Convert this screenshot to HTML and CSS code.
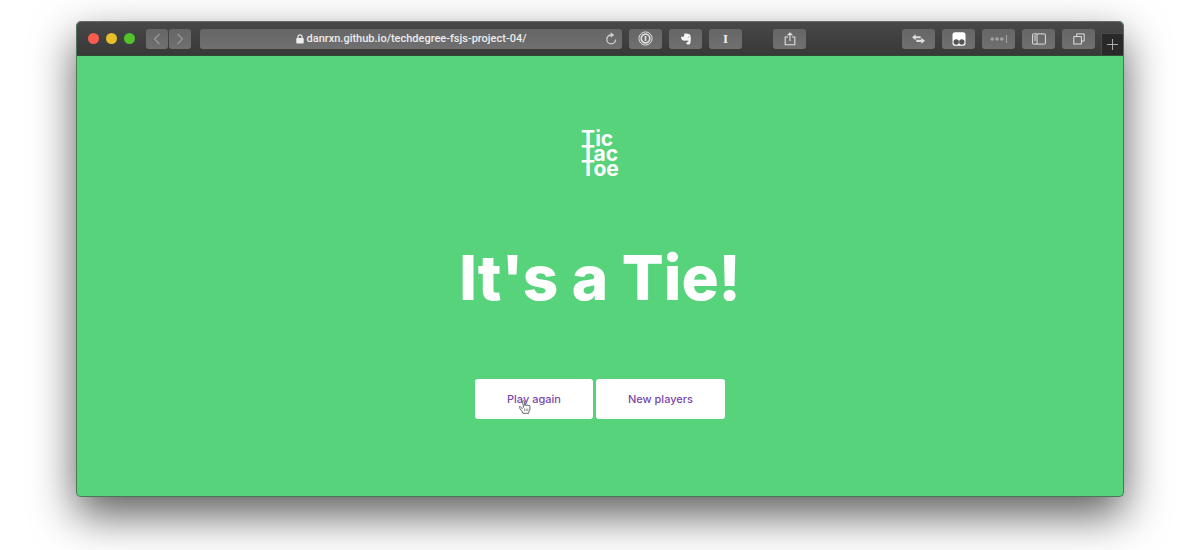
FILE: index.html
```html
<!DOCTYPE html>
<html lang="en">
<head>
  <meta charset="utf-8">
  <meta name="viewport" content="width=device-width, initial-scale=1">
  <title>Tic Tac Toe</title>
  <link rel="stylesheet" href="styles.css">
</head>
<body>
  <div class="window">
    <header class="toolbar">
      <div class="lights">
        <button class="light light-close" aria-label="Close"></button>
        <button class="light light-minimize" aria-label="Minimize"></button>
        <button class="light light-zoom" aria-label="Zoom"></button>
      </div>
      <div class="history">
        <button class="tool tool-nav" aria-label="Back">
          <svg width="8" height="12" viewBox="0 0 8 12"><path d="M6.5 1 1.5 6l5 5" fill="none" stroke="#999" stroke-width="1.2"/></svg>
        </button>
        <button class="tool tool-nav" aria-label="Forward">
          <svg width="8" height="12" viewBox="0 0 8 12"><path d="m1.5 1 5 5-5 5" fill="none" stroke="#999" stroke-width="1.2"/></svg>
        </button>
      </div>
      <div class="address">
        <span class="url">
          <svg width="8" height="10" viewBox="0 0 8 10"><rect x="0.3" y="4" width="7.4" height="5.6" rx="0.8" fill="#eee"/><path d="M2 4.5V2.8a2 2 0 0 1 4 0v1.7" fill="none" stroke="#eee" stroke-width="1.2"/></svg>
          danrxn.github.io/techdegree-fsjs-project-04/
        </span>
        <button class="reload" aria-label="Reload">
          <svg width="12" height="13" viewBox="0 0 12 13"><path d="M6.2 3a4.4 4.4 0 1 0 4.4 4.4" fill="none" stroke="#d0d0d0" stroke-width="1.3"/><path d="M5.7.3 9.2 3 5.7 5.8z" fill="#d0d0d0"/></svg>
        </button>
      </div>
      <div class="tools">
        <button class="tool" aria-label="Passwords">
          <svg width="15" height="15" viewBox="0 0 15 15" fill="none" stroke="#dedede"><circle cx="7.5" cy="7.5" r="6.6" stroke-width="1"/><circle cx="7.5" cy="7.5" r="4.3" stroke-width="1.7"/><path d="M7.5 5v5" stroke-width="1.7"/></svg>
        </button>
        <button class="tool" aria-label="Clip page">
          <svg width="10" height="12" viewBox="0 0 10 12"><path d="M3.2.8C4 .2 5 .3 5.6.8c1.4.1 2.8.2 3.4.8.8 1.4.9 4 .7 6.2-.1 2.3-.6 3.8-1.8 3.8H6.8c-1.7 0-1.9-2.4-.4-2.7l1-.1V7.8C6.6 8 5.8 7.7 5.4 7.2c-1 .9-3.1.6-4.2-.2C.5 6.2.1 4.9.1 3.7h2.1c.7 0 1-.3 1-.9z" fill="#f5f5f5"/><path d="M6.8 4.6c.4-.6 1.1-.5 1.4.1" stroke="#777" stroke-width="0.6" fill="none"/></svg>
        </button>
        <button class="tool tool-serif" aria-label="Save to read later">I</button>
      </div>
      <button class="tool tool-share" aria-label="Share">
        <svg width="12" height="14" viewBox="0 0 12 14" fill="none" stroke="#e0e0e0" stroke-width="1.1"><path d="M4 5H1.2v7.8h9.6V5H8M6 9V1.2M3.6 3.4 6 1l2.4 2.4"/></svg>
      </button>
      <div class="tools tools-end">
        <button class="tool" aria-label="Redirects">
          <svg width="13" height="10" viewBox="0 0 13 10" fill="#dcdcdc"><path d="M0 3.2 3.7.2v2h5v2.1h-5v1.9z"/><path d="M13 6.8 9.3 3.8v2h-5v2.1h5v1.9z"/></svg>
        </button>
        <button class="tool" aria-label="User scripts">
          <svg width="14" height="14" viewBox="0 0 14 14"><rect x="0.5" y="0.3" width="13" height="13.4" rx="2.5" fill="#fff"/><circle cx="4.2" cy="10" r="2.7" fill="#555"/><circle cx="9.8" cy="10" r="2.7" fill="#555"/></svg>
        </button>
        <button class="tool" aria-label="Autofill">
          <svg width="18" height="10" viewBox="0 0 18 10" fill="#a4a4a4"><circle cx="2.2" cy="5" r="1.8"/><circle cx="7" cy="5" r="1.8"/><circle cx="11.8" cy="5" r="1.8"/><path d="M16 1h1v8h-1z"/></svg>
        </button>
        <button class="tool" aria-label="Sidebar">
          <svg width="14" height="12" viewBox="0 0 14 12" fill="none" stroke="#dedede"><rect x="0.6" y="0.9" width="12.8" height="10.2" rx="0.6"/><path d="M5 1v10M2 3h2M2 5h2M2 7h2"/></svg>
        </button>
        <button class="tool" aria-label="Tab overview">
          <svg width="12" height="12" viewBox="0 0 12 12" fill="none" stroke="#dedede"><path d="M3.6 3.6V.9h7.6v7.2H8.4"/><rect x="0.8" y="3.6" width="7.6" height="7.4"/></svg>
        </button>
      </div>
      <button class="new-tab" aria-label="New tab">
        <svg width="11" height="11" viewBox="0 0 11 11"><path d="M5.5 0v11M0 5.5h11" stroke="#aaa"/></svg>
      </button>
    </header>
    <main class="screen">
      <div class="logo"><span>Tic</span><span>Tac</span><span>Toe</span></div>
      <h1 class="message">It's a Tie!</h1>
      <div class="actions">
        <a class="button" href="#again">Play again
          <svg class="pointer" width="12" height="14" viewBox="0 0 12 14"><path d="M3.3 8.5 1.2 6.6C.3 6 0 7.2.5 7.9l2.6 3.6.8 1.8h5.8l.2-1.6 1-2.4V6.2c0-1-1.3-1-1.4-.2 0-1.2-1.7-1.3-1.8-.3 0-1.2-1.8-1.2-1.8-.1L5.3 1.4C5 .2 3.4.4 3.6 1.6l.9 5.6z" fill="#fff" stroke="#444" stroke-width="0.8"/><path d="M5.5 8.5v2.6M7.2 8.5v2.6M8.8 8.5v2.6" stroke="#555" stroke-width="0.6"/></svg>
        </a>
        <a class="button" href="#players">New players</a>
      </div>
    </main>
  </div>
</body>
</html>
```
FILE: styles.css
```css
* {
  box-sizing: border-box;
}

body {
  min-height: 100vh;
  margin: 0;
  padding: 21px 76px 53px;
  background: #fff;
  font-family: Inter, "Liberation Sans", sans-serif;
}

button {
  padding: 0;
  border: 0;
  font: inherit;
}

svg {
  display: block;
  flex: none;
}

.window {
  border: 1px solid #4b7757;
  border-top-color: #6a6a6a;
  border-radius: 5px;
  background: #57d37c;
  box-shadow: 0 18px 44px rgba(0, 0, 0, 0.64);
}

.toolbar {
  display: flex;
  align-items: center;
  height: 34px;
  padding-left: 11px;
  border-bottom: 1px solid #2f4a37;
  border-radius: 4px 4px 0 0;
  background: linear-gradient(#484848, #383838);
}

.lights {
  display: flex;
  gap: 7px;
  margin-right: 11px;
}

.light {
  width: 11px;
  height: 11px;
  border-radius: 50%;
}

.light-close {
  background: #fc5b50;
}

.light-minimize {
  background: #e6bf2b;
}

.light-zoom {
  background: #53c22b;
}

.history {
  display: flex;
  gap: 1px;
  margin-right: 9px;
}

.tool {
  display: flex;
  align-items: center;
  justify-content: center;
  flex: none;
  width: 33px;
  height: 20px;
  border-radius: 3px;
  background: linear-gradient(#666, #707070);
  color: #eee;
}

.tool-nav {
  width: 22px;
}

.tool-serif {
  font: 700 13px/20px "Liberation Serif", serif;
}

.address {
  display: flex;
  align-items: center;
  flex: 1;
  min-width: 0;
  height: 20px;
  padding: 0 5px 0 17px;
  border-radius: 3px;
  background: linear-gradient(#666, #707070);
}

.url {
  display: flex;
  align-items: center;
  justify-content: center;
  flex: 1;
  gap: 3px;
  min-width: 0;
  color: #ececec;
  font-family: Roboto, "Liberation Sans", sans-serif;
  font-size: 11px;
  font-weight: 500;
  line-height: 20px;
  white-space: nowrap;
}

.reload {
  background: none;
}

.tools {
  display: flex;
  gap: 7px;
  margin-left: 7px;
}

.tool-share {
  margin-left: 31px;
}

.tools-end {
  margin-left: 96px;
}

.new-tab {
  display: flex;
  align-items: center;
  justify-content: center;
  align-self: flex-end;
  width: 22px;
  height: 22px;
  margin-left: 6px;
  border: 1px solid #4a4a4a;
  border-width: 1px 0 0 1px;
  background: #292929;
}

.screen {
  display: flex;
  flex-direction: column;
  align-items: center;
  padding: 75px 20px 77px;
}

.logo {
  display: flex;
  flex-direction: column;
  color: #fff;
  font-size: 21px;
  font-weight: 700;
  line-height: 15px;
}

.message {
  margin: 63px 0;
  color: #fff;
  font-size: 62px;
  font-weight: 800;
  line-height: 77px;
  text-align: center;
}

.actions {
  display: flex;
  gap: 3px;
}

.button {
  position: relative;
  padding: 0 32px;
  border-radius: 3px;
  background: #fff;
  color: #7b47ad;
  font-size: 11px;
  font-weight: 500;
  line-height: 40px;
  text-decoration: none;
}

.pointer {
  position: absolute;
  top: 21px;
  left: 44px;
}
```
